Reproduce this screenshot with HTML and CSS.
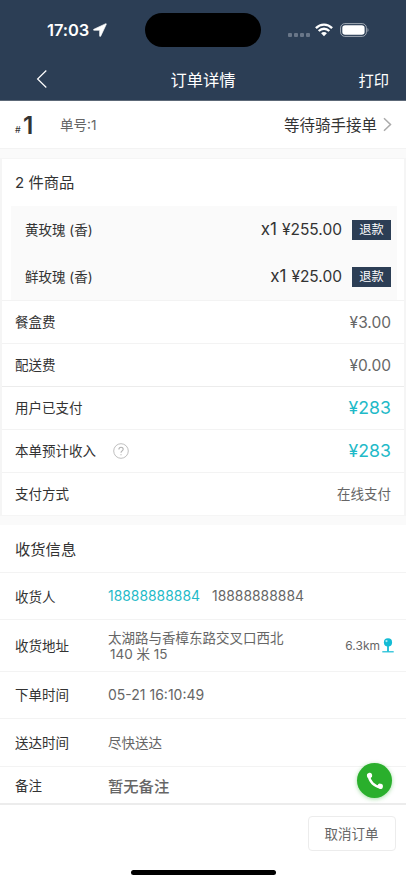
FILE: index.html
```
<!DOCTYPE html>
<html lang="zh-CN">
<head>
<meta charset="utf-8">
<meta name="viewport" content="width=device-width, initial-scale=1">
<title>订单详情</title>
<link rel="stylesheet" href="styles.css">
</head>
<body>
<div class="app">
  <header class="header">
    <div class="status">
      <span class="clock">17:03</span>
      <svg class="locate" width="14" height="14" viewBox="0 0 14 14"><path d="M12.7.7.9 6.2c-.7.4-.6 1.1.2 1.1h5.5v5.5c0 .9.8 1 1.2.2L13.3 1.300c.2-.5-.1-.8-.6-.6z" fill="#fff" stroke="#fff" stroke-width=".6"/></svg>
      <div class="island"></div>
      <div class="signal"><i></i><i></i><i></i><i></i></div>
      <svg class="wifi" width="18" height="14" viewBox="0 0 18 14"><g fill="none" stroke="#fff" stroke-width="2.300"><path d="M.9 5.100C5.500.5 12.500.5 17.100 5.100"/><path d="M3.700 8C6.800 5 11.200 5 14.300 8"/></g><path d="M9 13.200 6.100 10.200C7.700 8.600 10.300 8.600 11.900 10.200z" fill="#fff"/></svg>
      <svg class="battery" width="29" height="14" viewBox="0 0 29 14"><rect x=".6" y=".6" width="25.800" height="12.800" rx="4.200" fill="none" stroke="#a1a9b4"/><rect x="2.300" y="2.200" width="22.300" height="9.600" rx="2.800" fill="#fff"/><path d="M27.500 5v4c1.300-.5 1.300-3.500 0-4z" fill="#a1a9b4"/></svg>
    </div>
    <nav class="nav">
      <svg class="back" width="12" height="20" viewBox="0 0 12 20"><path d="M10.300 1.500 1.600 10l8.700 8.500" fill="none" stroke="#fff" stroke-width="1.200"/></svg>
      <h1>订单详情</h1>
      <span class="print">打印</span>
    </nav>
  </header>

  <section class="order">
    <span class="hash">#</span><b class="seq">1</b><span class="no">单号:1</span>
    <span class="state">等待骑手接单</span>
    <svg class="more" width="9" height="15" viewBox="0 0 9 15"><path d="M1 1.200 7.500 7.500 1 13.800" fill="none" stroke="#aaa" stroke-width="1.500"/></svg>
  </section>

  <section class="card">
    <h2><span class="count">2</span> 件商品</h2>
    <div class="goods">
      <div class="item"><span class="name">黄玫瑰 (香)</span><span class="qty">x1</span><span class="price">¥255.00</span><span class="refund">退款</span></div>
      <div class="item"><span class="name">鲜玫瑰 (香)</span><span class="qty">x1</span><span class="price">¥25.00</span><span class="refund">退款</span></div>
    </div>
    <div class="fee"><span>餐盒费</span><span class="value">¥3.00</span></div>
    <div class="fee"><span>配送费</span><span class="value">¥0.00</span></div>
    <div class="fee strong"><span>用户已支付</span><span class="value total">¥283</span></div>
    <div class="fee"><span>本单预计收入</span><svg class="help" width="16" height="16" viewBox="0 0 16 16"><circle cx="8" cy="8" r="7.300" fill="none" stroke="#bfbfbf"/><path d="M5.900 6.400C5.900 3.500 10.200 3.600 10.200 6.200 10.200 7.900 8 8 8 9.800M8 11.200v1.100" fill="none" stroke="#b3b3b3" stroke-width="1.100"/></svg><span class="value total">¥283</span></div>
    <div class="fee"><span>支付方式</span><span class="value pay">在线支付</span></div>
  </section>

  <section class="delivery">
    <h2>收货信息</h2>
    <div class="row person"><span class="label">收货人</span><span class="phone link">18888888884</span><span class="phone">18888888884</span></div>
    <div class="row address"><span class="label">收货地址</span><span class="place">太湖路与香樟东路交叉口西北<br><span class="detail">140 米 15</span></span><span class="km">6.3km</span><svg class="pin" width="12" height="15" viewBox="0 0 12 15"><path d="M.3 13.800h11.400" stroke="#14bcd5" stroke-width="1.200"/><path d="M6 7v6.500" stroke="#14bcd5" stroke-width="1.800"/><circle cx="6" cy="4.400" r="4.100" fill="#14bcd5"/><circle cx="4.500" cy="3.100" r="1.100" fill="#a9edf4"/></svg></div>
    <div class="row placed"><span class="label">下单时间</span><span class="time">05-21 16:10:49</span></div>
    <div class="row arrive"><span class="label">送达时间</span><span>尽快送达</span></div>
    <div class="row note"><span class="label">备注</span><span class="remark">暂无备注</span></div>
  </section>

  <footer class="footer">
    <button class="cancel">取消订单</button>
    <div class="home"></div>
  </footer>
  <div class="call"><svg width="18" height="18" viewBox="0 0 18 18"><path d="M2.900 3.500C3.300 9.500 8.300 14.400 14.300 15" fill="none" stroke="#fff" stroke-width="2.500"/><rect x="1" y=".8" width="5.200" height="5.400" rx="2.300" transform="rotate(-12 3.600 3.800)" fill="#fff"/><rect x="11.600" y="11.700" width="5.400" height="5.200" rx="2.300" transform="rotate(12 14.200 14)" fill="#fff"/></svg></div>
</div>
</body>
</html>
```
FILE: styles.css
```
* { box-sizing: border-box; }
body {
  margin: 0;
  background: #fff;
  color: #333;
  font-family: Inter, "Noto Sans CJK SC", sans-serif;
  font-size: 13.5px;
}
h1, h2 { margin: 0; font-weight: 400; }
svg { display: block; flex: none; }
span { white-space: nowrap; }
.app { position: relative; width: 406px; height: 883px; overflow: hidden; display: flex; flex-direction: column; }

.header { height: 101px; background: #2c3e55; border-bottom: 1px solid #5c6877; color: #fff; flex: none; }
.status { height: 60px; display: flex; align-items: center; padding-left: 47px; }
.clock { width: 45px; font-size: 16.5px; font-weight: 600; letter-spacing: -0.1px; }
.locate { margin-left: 1px; }
.island { width: 116px; height: 34px; margin-left: 38px; border-radius: 17px; background: #000; }
.signal { display: flex; gap: 2px; margin: 9px 0 0 27px; }
.signal i { width: 4px; height: 4px; border-radius: 1px; background: #697688; }
.wifi { margin-left: 5px; }
.battery { margin-left: 7px; }
.nav { height: 38px; display: grid; grid-template-columns: 100px 1fr 100px; align-items: center; }
.back { margin-left: 36px; }
.nav h1 { font-size: 16.3px; text-align: center; margin-top: -1px; }
.print { font-size: 15.3px; text-align: right; padding-right: 17px; margin-top: -1px; }

.order { height: 48px; display: flex; align-items: center; padding: 0 14px 0 15px; border-bottom: 1px solid #f3f3f3; flex: none; }
.hash { font-size: 9px; margin-top: 10px; width: 8px; }
.seq { font-size: 24.5px; line-height: 28px; font-weight: 600; width: 13px; }
.no { margin: 0 0 2px 24px; color: #666; }
.state { margin: 0 0 2px auto; font-size: 15.5px; }
.more { margin-left: 6px; }

.card { margin-top: 9px; height: 358px; border: 1px solid #f5f5f5; border-width: 1px 2px; background: #fff; box-shadow: 0 -9px #fafafa, 0 9px #fafafa; flex: none; }
h2 { padding-left: 15px; height: 47px; line-height: 49px; font-size: 15.3px; }
.card h2 { padding-left: 13px; line-height: 47px; }
.count { font-size: 15px; }
.goods { margin: 0 7px 0 9px; background: #fafafa; height: 94px; }
.item { height: 47px; padding: 0 6px 0 14px; display: flex; align-items: center; }
.name { margin-right: auto; padding-bottom: 2px; }
.qty { font-size: 17px; margin-right: 5px; padding-bottom: 1px; }
.price { font-size: 15.5px; padding-bottom: 1px; }
.refund { width: 39px; height: 20px; line-height: 19px; margin-left: 10px; background: #2c3e55; color: #fff; font-size: 12.2px; text-align: center; }
.fee { height: 43px; display: flex; align-items: center; padding: 0 13px 2px; border-top: 1px solid #f3f3f3; }
.fee.strong { border-color: #ececec; }
.value { margin-left: auto; color: #666; font-size: 15.5px; position: relative; top: 1px; }
.value.total { color: #1fbac8; font-size: 17.7px; top: 0; }
.value.pay { font-size: 13.5px; top: 0; }
.help { margin: 2px 0 0 17px; }

.delivery { margin-top: 9px; height: 278px; flex: none; }
.row { display: flex; align-items: center; padding: 0 12px 2px 15px; border-top: 1px solid #f3f3f3; color: #666; }
.label { width: 93px; color: #333; }
.person { height: 47px; padding-bottom: 0; }
.person .label { padding-bottom: 1px; }
.phone { width: 104px; font-size: 13.9px; }
.link { color: #1fbac8; }
.address { height: 52px; padding-bottom: 1px; }
.place { line-height: 16px; padding-top: 1px; }
.detail { padding-left: 2px; }
.km { margin-left: auto; font-size: 12px; }
.pin { margin-left: 2px; }
.placed { height: 47px; }
.time { font-size: 14px; }
.arrive { height: 48px; }
.note { height: 37px; padding-bottom: 1px; }
.remark { font-size: 15.3px; font-weight: 500; }

.footer { height: 80px; border-top: 2px solid #ececec; display: flex; flex-direction: column; flex: none; }
.cancel { align-self: flex-end; width: 88px; height: 35px; margin: 11px 10px 0 0; padding: 0 1px 2px 0; border: 1px solid #ececec; border-radius: 4px; background: #fff; color: #666; font: inherit; }
.home { width: 145px; height: 5px; margin: 19px auto 0; border-radius: 3px; background: #000; }
.call { position: absolute; left: 357px; top: 763px; width: 35px; height: 35px; border-radius: 50%; background: #2aaf2c; box-shadow: 0 1px 4px #2aaf2c70; display: flex; align-items: center; justify-content: center; }
```
